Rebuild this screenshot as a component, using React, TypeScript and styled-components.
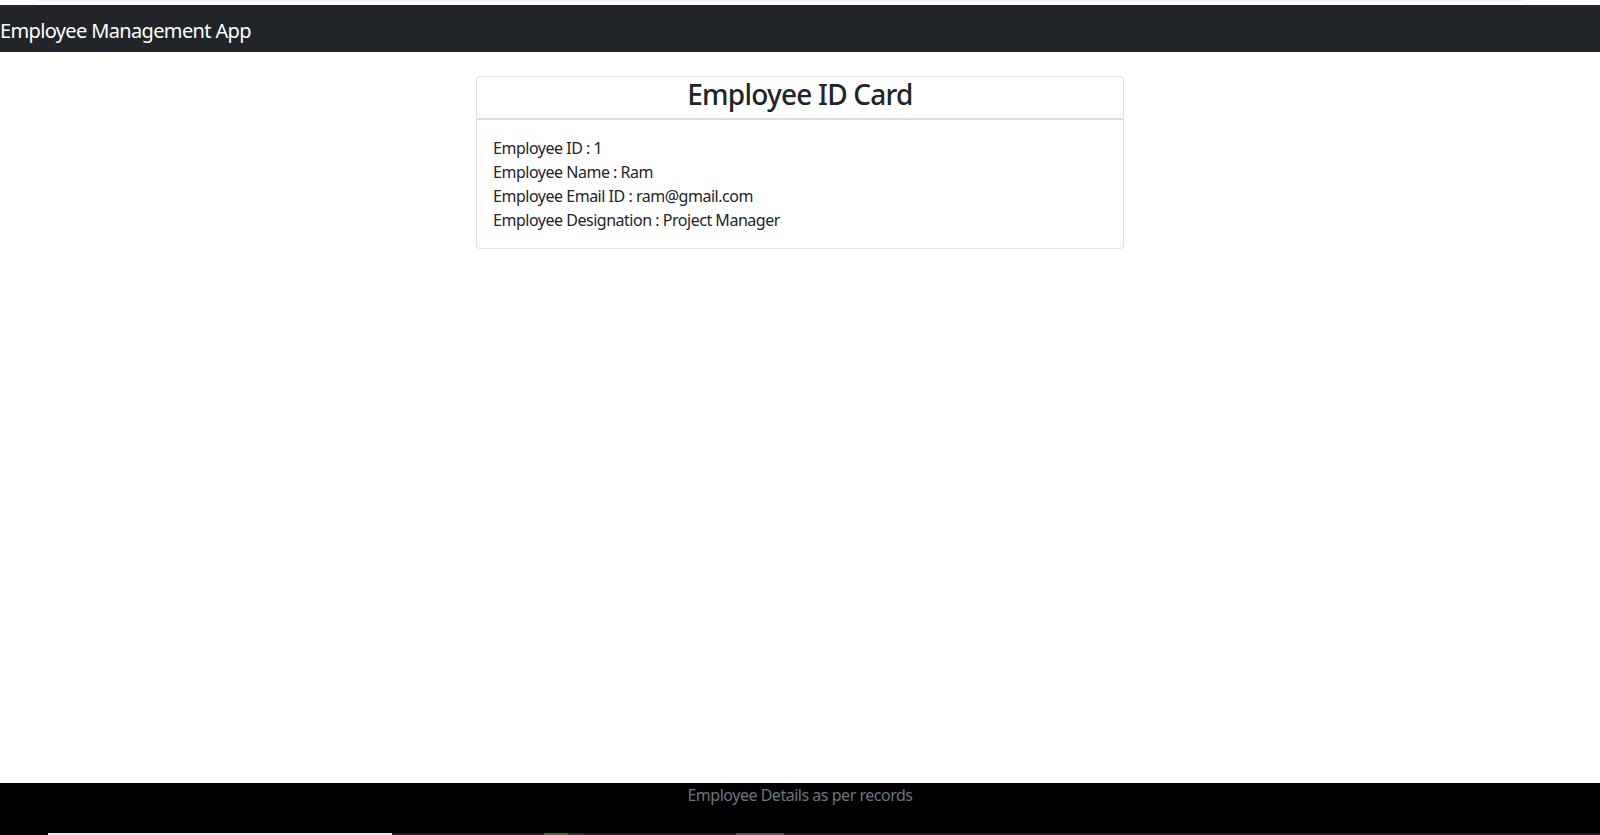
import React from "react";
import styled, { createGlobalStyle } from "styled-components";

const GlobalStyle = createGlobalStyle`
  html, body { margin: 0; padding: 0; background: #fff; }
  body {
    font-family: "Segoe UI", "Noto Sans", "Open Sans", sans-serif;
    color: #212529;
    font-size: 16px;
    line-height: 1.5;
    letter-spacing: -0.03em;
  }
  * { box-sizing: border-box; }
`;

const Page = styled.div`
  height: 835px;
  display: flex;
  flex-direction: column;
  overflow: hidden;
`;

const TopEdge = styled.div`
  height: 5px;
  display: flex;
  padding: 0 78px 0 38px;
`;

const TopShade = styled.div`
  flex: 1;
  height: 1px;
  background: #ececec;
  border-radius: 0 0 3px 3px;
`;

const Navbar = styled.nav`
  height: 47px;
  background: #212529;
  display: flex;
  align-items: center;
  padding-top: 4px;
`;

const Brand = styled.span`
  color: #fff;
  font-size: 20px;
  line-height: 30px;
  white-space: nowrap;
  letter-spacing: -0.032em;
`;

const Main = styled.main`
  flex: 1;
  display: flex;
  justify-content: center;
  align-items: flex-start;
  padding-top: 24px;
`;

const Card = styled.section`
  width: 648px;
  border: 1px solid #dfdfdf;
  border-radius: 4px;
  background: #fff;
`;

const CardHeader = styled.header`
  height: 43px;
  border-bottom: 2px solid #dedede;
  display: flex;
  align-items: center;
  justify-content: center;
  padding-bottom: 7px;
`;

const Title = styled.h3`
  margin: 0;
  font-size: 28px;
  font-weight: 500;
  line-height: 34px;
  letter-spacing: -0.028em;
`;

const CardBody = styled.div`
  padding: 16px 16px 16px;
`;

const Line = styled.div`
  font-size: 16px;
  line-height: 24px;
`;

const Footer = styled.footer`
  height: 52px;
  background: #000;
  display: flex;
  flex-direction: column;
`;

const FooterText = styled.div`
  flex: 1;
  text-align: center;
  color: #6c757d;
  font-size: 16px;
  line-height: 24px;
`;

const Strip = styled.div`
  height: 2px;
  display: flex;
  background: #222;
`;

const Seg = styled.div<{ $w: number; $c: string }>`
  width: ${(p) => p.$w}px;
  background: ${(p) => p.$c};
`;

const segments: [number, string][] = [
  [48, "#000"],
  [344, "#e9e9e9"],
  [152, "#222"],
  [24, "#3f6b35"],
  [16, "#333"],
  [152, "#222"],
  [48, "#555"],
];

export default function App() {
  return (
    <>
      <GlobalStyle />
      <Page>
        <TopEdge>
          <TopShade />
        </TopEdge>
        <Navbar>
          <Brand>Employee Management App</Brand>
        </Navbar>
        <Main>
          <Card>
            <CardHeader>
              <Title>Employee ID Card</Title>
            </CardHeader>
            <CardBody>
              <Line>Employee ID : 1</Line>
              <Line>Employee Name : Ram</Line>
              <Line>Employee Email ID : ram@gmail.com</Line>
              <Line>Employee Designation : Project Manager</Line>
            </CardBody>
          </Card>
        </Main>
        <Footer>
          <FooterText>Employee Details as per records</FooterText>
          <Strip>
            {segments.map(([w, c], i) => (
              <Seg key={i} $w={w} $c={c} />
            ))}
          </Strip>
        </Footer>
      </Page>
    </>
  );
}
